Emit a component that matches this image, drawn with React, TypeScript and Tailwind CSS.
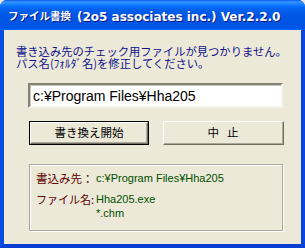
import React from "react";

export default function App() {
  const jp = { fontFamily: '"Noto Sans CJK JP", "Noto Sans", sans-serif' };
  const lat = { fontFamily: '"Liberation Sans", "Noto Sans CJK JP", sans-serif' };
  return (
    <div className="w-[305px] h-[248px] bg-[#ece9d8] overflow-hidden">
      <div className="w-[305px] h-[248px] flex flex-col rounded-t-[7px] overflow-hidden bg-[#0831d9]">
        {/* Title bar */}
        <div
          className="h-[30px] shrink-0 flex items-center pl-[8px] pt-[3px] text-white font-bold bg-[linear-gradient(to_bottom,#0058ee_0%,#3a93ff_6%,#288eff_10%,#127dff_16%,#036ffc_22%,#0262ee_30%,#0057e5_50%,#0054e3_85%,#0055eb_93%,#005bf5_97%,#026afe_100%)] [text-shadow:1px_1px_0_#0a1883]"
        >
          <span className="text-[10.5px] leading-none" style={jp}>ファイル書換</span>
          <span
            className="text-[12px] leading-none ml-[6px]"
            style={{ fontFamily: '"DejaVu Sans", "Noto Sans CJK JP", sans-serif' }}
          >
            (2o5 associates inc.) Ver.2.2.0
          </span>
        </div>
        {/* Client area with frame */}
        <div className="flex-1 flex flex-col border-l-[4px] border-r-[4px] border-b-[4px] border-l-[#0a4de4] border-r-[#0a45dc] border-b-[#0a3fd4] shadow-[inset_0_-1px_0_#001e9c]">
          <div className="flex-1 bg-[#ece9d8] flex flex-col">
            <div
              className="mt-[15px] ml-[12px] text-[11.3px] leading-[12px] text-[#10108c] whitespace-nowrap"
              style={jp}
            >
              <div>書き込み先のチェック用ファイルが見つかりません。</div>
              <div>パス名(ﾌｫﾙﾀﾞ名)を修正してください。</div>
            </div>
            <div className="mt-[14px] ml-[24px] w-[255px] h-[25px] bg-white border-2 border-t-[#858378] border-l-[#858378] border-r-[#f4f3ee] border-b-[#f4f3ee] shadow-[inset_1px_1px_0_#c8c5b8] flex items-center pl-[3px]">
              <span className="text-[14px] leading-none text-black" style={lat}>
                c:¥Program Files¥Hha205
              </span>
            </div>
            <div className="mt-[13px] ml-[25px] flex gap-[14px]">
              <button
                className="w-[120px] h-[24px] border border-black bg-[#ece9d8] flex items-center justify-center p-0"
              >
                <div className="w-full h-full flex items-center justify-center border border-t-white border-l-white border-r-[#716f64] border-b-[#716f64] shadow-[inset_-1px_-1px_0_#aca899]">
                  <span className="text-[11.5px] leading-none text-black" style={jp}>書き換え開始</span>
                </div>
              </button>
              <button className="w-[121px] h-[24px] bg-[#ece9d8] p-0 border border-t-white border-l-white border-r-[#716f64] border-b-[#716f64] shadow-[inset_-1px_-1px_0_#aca899] flex items-center justify-center">
                <span className="text-[11.5px] leading-none text-black tracking-[1px]" style={jp}>中&nbsp;&nbsp;止</span>
              </button>
            </div>
            <div className="mt-[19px] ml-[25px] w-[254px] h-[67px] border border-[#aca899] shadow-[1px_1px_0_#ffffff,inset_1px_1px_0_#ffffff] pt-[5px] pl-[6px]">
              <div className="grid grid-cols-[60px_1fr] items-center">
                <div className="text-[11.5px] leading-[16px] text-[#600000] whitespace-nowrap" style={jp}>書込み先：</div>
                <div className="text-[11px] leading-[16px] text-[#005000] whitespace-nowrap" style={lat}>c:¥Program Files¥Hha205</div>
              </div>
              <div className="grid grid-cols-[60px_1fr] mt-[5px]">
                <div className="text-[11px] leading-[16px] text-[#600000] whitespace-nowrap" style={jp}>ファイル名:</div>
                <div className="text-[11px] leading-[14px] text-[#005000] whitespace-nowrap pt-[1px]" style={lat}>
                  <div>Hha205.exe</div>
                  <div>*.chm</div>
                </div>
              </div>
            </div>
          </div>
        </div>
      </div>
    </div>
  );
}
